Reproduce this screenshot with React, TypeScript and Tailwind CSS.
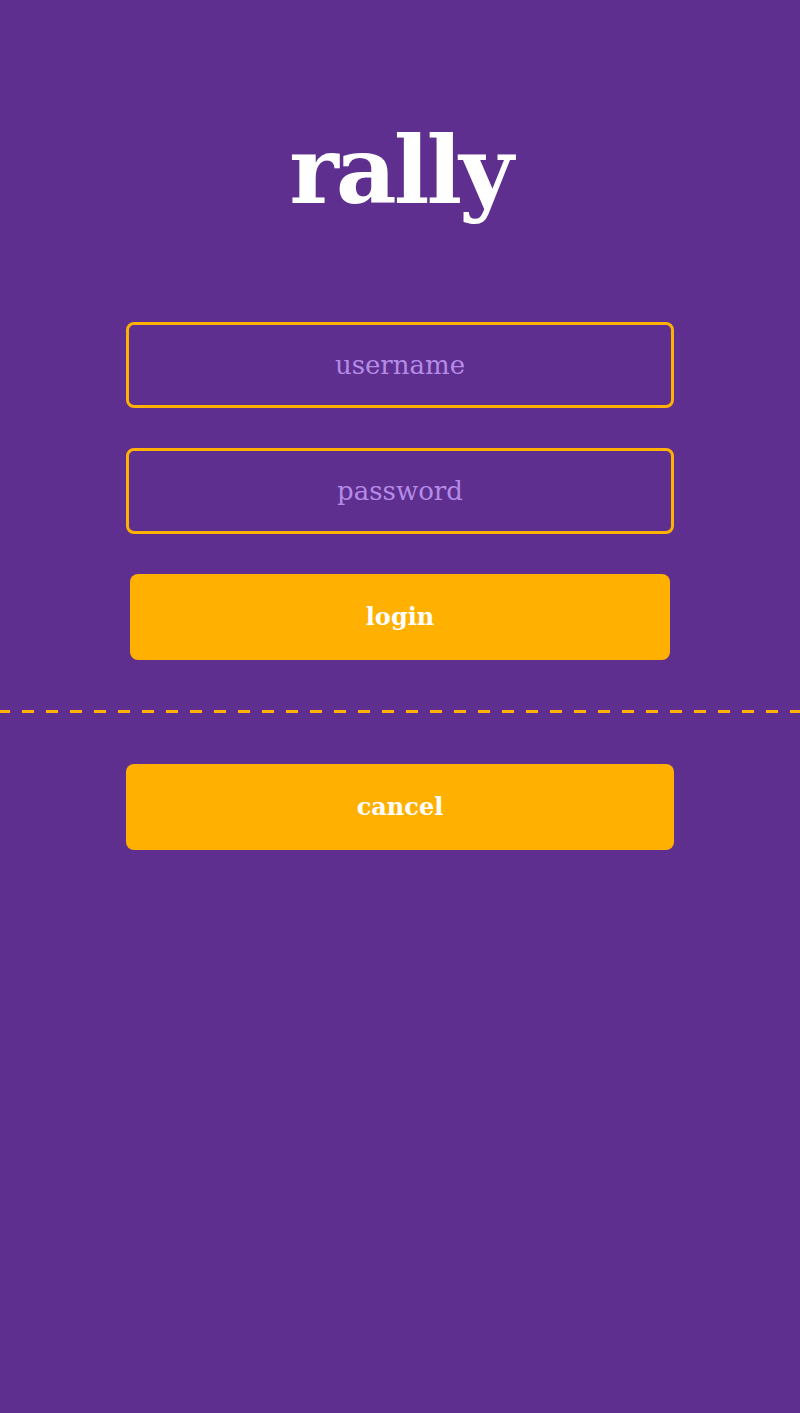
import React from 'react';

const slab = "font-['DejaVu_Serif','Liberation_Serif',serif]";

export default function App() {
  return (
    <div className={`min-h-[1413px] w-full bg-[#5e2f8f] ${slab}`}>
      <div className="flex flex-col items-center pt-[110px]">
        <h1 className="text-[94px] font-bold leading-[120px] tracking-[-3px] text-white">rally</h1>
      </div>

      <form className="mx-auto mt-[92px] flex w-[548px] flex-col items-center" onSubmit={(e) => e.preventDefault()}>
        <input
          type="text"
          placeholder="username"
          className="h-[86px] w-full rounded-lg border-[3px] border-[#ffb000] bg-transparent text-center text-[26px] text-white outline-none placeholder:text-[#b48be6]"
        />
        <input
          type="password"
          placeholder="password"
          className="mt-[40px] h-[86px] w-full rounded-lg border-[3px] border-[#ffb000] bg-transparent text-center text-[26px] text-white outline-none placeholder:text-[#b48be6]"
        />
        <button
          type="submit"
          className="mt-[40px] h-[86px] w-[540px] rounded-lg bg-[#ffb000] text-[24px] font-bold text-white"
        >
          login
        </button>
      </form>

      <div className="mt-[50px] h-[3px] w-full bg-[linear-gradient(to_right,#ffb000_50%,transparent_50%)] bg-[length:24px_3px] bg-[position:-2px_0] bg-repeat-x" />

      <div className="mx-auto mt-[51px] w-[548px]">
        <button type="button" className="h-[86px] w-full rounded-lg bg-[#ffb000] text-[24px] font-bold text-white">
          cancel
        </button>
      </div>
    </div>
  );
}
